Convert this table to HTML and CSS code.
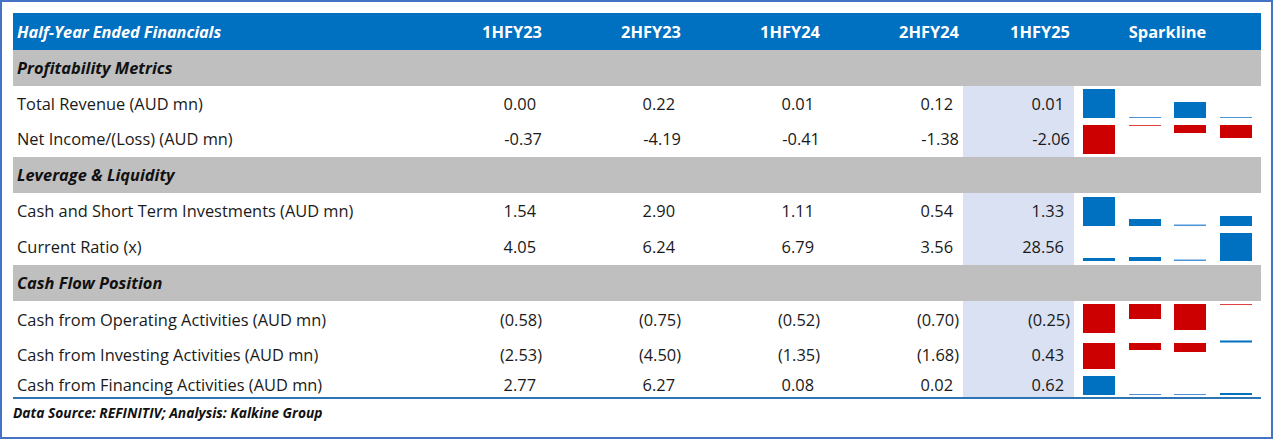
FILE: index.html
```html
<!DOCTYPE html>
<html lang="en">
<head>
<meta charset="utf-8">
<title>Half-Year Ended Financials</title>
<link rel="stylesheet" href="styles.css">
</head>
<body>
<div class="frame">
  <table class="fin">
    <colgroup>
      <col class="c-label"><col class="c-num"><col class="c-num"><col class="c-num"><col class="c-num"><col class="c-cur"><col class="c-spark">
    </colgroup>
    <thead>
      <tr class="head">
        <th class="label">Half-Year Ended Financials</th>
        <th>1HFY23</th><th>2HFY23</th><th>1HFY24</th><th>2HFY24</th><th>1HFY25</th>
        <th class="spark-h">Sparkline</th>
      </tr>
    </thead>
    <tbody>
      <tr class="section"><td colspan="7">Profitability Metrics</td></tr>
      <tr class="h35">
        <td class="label">Total Revenue (AUD mn)</td>
        <td class="num pos">0.00</td><td class="num pos">0.22</td><td class="num pos">0.01</td><td class="num pos">0.12</td><td class="num pos cur">0.01</td>
        <td class="spark"><svg width="187" height="35" viewBox="0 0 187 35"><rect class="b" x="9" y="3" width="32" height="29"/><rect class="bt" x="55" y="31" width="32" height="1"/><rect class="b" x="100" y="16" width="32" height="16"/><rect class="bt" x="146" y="31" width="32" height="1"/></svg></td>
      </tr>
      <tr class="h36">
        <td class="label">Net Income/(Loss) (AUD mn)</td>
        <td class="num">-0.37</td><td class="num">-4.19</td><td class="num">-0.41</td><td class="num">-1.38</td><td class="num cur">-2.06</td>
        <td class="spark"><svg width="187" height="36" viewBox="0 0 187 36"><rect class="r" x="9" y="4" width="32" height="29"/><rect class="rt" x="55" y="4" width="32" height="1"/><rect class="r" x="100" y="4" width="32" height="8"/><rect class="r" x="146" y="4" width="32" height="13"/></svg></td>
      </tr>
      <tr class="section"><td colspan="7">Leverage &amp; Liquidity</td></tr>
      <tr class="h36">
        <td class="label">Cash and Short Term Investments (AUD mn)</td>
        <td class="num pos">1.54</td><td class="num pos">2.90</td><td class="num pos">1.11</td><td class="num pos">0.54</td><td class="num pos cur">1.33</td>
        <td class="spark"><svg width="187" height="36" viewBox="0 0 187 36"><rect class="b" x="9" y="4" width="32" height="29"/><rect class="b" x="55" y="26" width="32" height="7"/><rect class="bt" x="100" y="31.5" width="32" height="1.5"/><rect class="b" x="146" y="23" width="32" height="10"/></svg></td>
      </tr>
      <tr class="h36">
        <td class="label">Current Ratio (x)</td>
        <td class="num pos">4.05</td><td class="num pos">6.24</td><td class="num pos">6.79</td><td class="num pos">3.56</td><td class="num pos cur">28.56</td>
        <td class="spark"><svg width="187" height="36" viewBox="0 0 187 36"><rect class="b" x="9" y="29" width="32" height="3"/><rect class="b" x="55" y="28" width="32" height="4"/><rect class="bt" x="100" y="30.5" width="32" height="1.5"/><rect class="b" x="146" y="4" width="32" height="28"/></svg></td>
      </tr>
      <tr class="section"><td colspan="7">Cash Flow Position</td></tr>
      <tr class="h37">
        <td class="label">Cash from Operating Activities (AUD mn)</td>
        <td class="num">(0.58)</td><td class="num">(0.75)</td><td class="num">(0.52)</td><td class="num">(0.70)</td><td class="num cur">(0.25)</td>
        <td class="spark"><svg width="187" height="37" viewBox="0 0 187 37"><rect class="r" x="9" y="3" width="32" height="29"/><rect class="r" x="55" y="3" width="32" height="15"/><rect class="r" x="100" y="3" width="32" height="26"/><rect class="rt" x="146" y="3" width="32" height="1"/></svg></td>
      </tr>
      <tr class="h34">
        <td class="label">Cash from Investing Activities (AUD mn)</td>
        <td class="num">(2.53)</td><td class="num">(4.50)</td><td class="num">(1.35)</td><td class="num">(1.68)</td><td class="num pos cur">0.43</td>
        <td class="spark"><svg width="187" height="34" viewBox="0 0 187 34"><rect class="r" x="9" y="5" width="32" height="26"/><rect class="r" x="55" y="5" width="32" height="7"/><rect class="r" x="100" y="5" width="32" height="9"/><rect class="b" x="146" y="2.5" width="32" height="2"/></svg></td>
      </tr>
      <tr class="h25">
        <td class="label">Cash from Financing Activities (AUD mn)</td>
        <td class="num pos">2.77</td><td class="num pos">6.27</td><td class="num pos">0.08</td><td class="num pos">0.02</td><td class="num pos cur">0.62</td>
        <td class="spark"><svg width="187" height="25" viewBox="0 0 187 25"><rect class="b" x="9" y="4" width="32" height="19"/><rect class="bt" x="55" y="22" width="32" height="1"/><rect class="bt" x="100" y="22" width="32" height="1"/><rect class="b" x="146" y="21" width="32" height="2"/></svg></td>
      </tr>
    </tbody>
  </table>
  <p class="source">Data Source: REFINITIV; Analysis: Kalkine Group</p>
</div>
</body>
</html>
```
FILE: styles.css
```css
html, body {
  margin: 0;
  padding: 0;
  background: #ffffff;
}

.frame {
  box-sizing: border-box;
  width: 1273px;
  height: 439px;
  border: 2px solid #4472c4;
  padding: 11px 0 0 11px;
  font-family: "Open Sans", "Noto Sans", sans-serif;
  color: #1a1a1a;
}

.fin {
  border-collapse: collapse;
  table-layout: fixed;
  width: 1248px;
  border-bottom: 2px solid #2e75b6;
  font-size: 16.4px;
}

.c-label { width: 394px; }
.c-num { width: 139px; }
.c-cur { width: 111px; }
.c-spark { width: 187px; }

.fin th,
.fin td {
  padding: 0 4px;
  white-space: nowrap;
  line-height: 20px;
}

.head th {
  background: #0070c0;
  color: #ffffff;
  font-weight: 700;
  height: 37px;
  text-align: right;
}

.head th.label {
  text-align: left;
  font-style: italic;
  letter-spacing: -0.1px;
}

.head th.spark-h {
  text-align: center;
}

.section td {
  background: #bfbfbf;
  font-weight: 700;
  font-style: italic;
  height: 36px;
  color: #111111;
}

.h25 td { height: 25px; }
.h34 td { height: 34px; }
.h35 td { height: 35px; }
.h36 td { height: 36px; }
.h37 td { height: 37px; }

.label {
  text-align: left;
}

.num {
  text-align: right;
}

.num.pos {
  padding-right: 10px;
}

.cur {
  background: #d9e1f2;
}

.spark {
  padding: 0;
  vertical-align: top;
}

.fin td.spark {
  padding: 0;
  line-height: 0;
}

.spark svg {
  display: block;
}

.spark .b { fill: #0070c0; }
.spark .bt { fill: #4d94d6; }
.spark .r { fill: #cc0000; }
.spark .rt { fill: #e04040; }

.source {
  margin: 5px 0 0 0;
  font-size: 13.8px;
  line-height: 18px;
  font-weight: 700;
  font-style: italic;
  color: #111111;
}
```
